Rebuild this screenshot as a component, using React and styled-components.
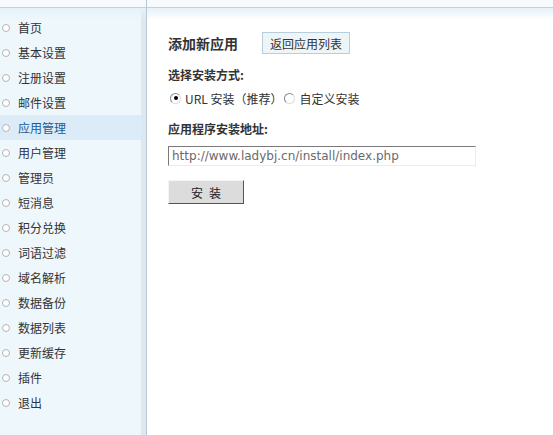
import React from 'react';
import styled, { createGlobalStyle, css } from 'styled-components';

const GlobalStyle = createGlobalStyle`
  html, body { margin: 0; padding: 0; background: #fff; }
  body {
    font-family: "Noto Sans CJK SC", "DejaVu Sans", sans-serif;
    font-size: 12px;
    color: #333;
  }
`;

const Page = styled.div`
  display: flex;
  height: 435px;
  overflow: hidden;
`;

const Sidebar = styled.div`
  width: 146px;
  flex: 0 0 146px;
  border-right: 1px solid #b6c8d4;
  background: linear-gradient(to right, #eef7fc 141px, #dce9f3 141px);
  display: flex;
  flex-direction: column;
`;

const TopStrip = styled.div`
  height: 7px;
  flex: 0 0 7px;
  background: #f6fafd;
  border-bottom: 1px solid #c0d2dd;
`;

const Glow = styled.div`
  height: 12px;
  background: linear-gradient(#e5f1f9, rgba(255, 255, 255, 0));
`;

const Menu = styled.ul`
  list-style: none;
  margin: 0;
  padding: 0;
  width: 141px;
  margin-top: -5px;
`;

const MenuItem = styled.li`
  height: 25px;
  display: flex;
  align-items: center;
  padding-left: 2px;
  gap: 6px;
  color: #333;
  ${(p) =>
    p.active &&
    css`
      background: #dbecf8;
      color: #1c5a94;
    `}
`;

const Bullet = styled.span`
  width: 6px;
  height: 6px;
  border-radius: 50%;
  border: 1px solid #b4b4b4;
  background: #fff;
  margin-right: 2px;
`;

const Main = styled.div`
  flex: 1;
  display: flex;
  flex-direction: column;
`;

const Content = styled.div`
  padding: 12px 0 0 21px;
  display: flex;
  flex-direction: column;
`;

const TitleRow = styled.div`
  display: flex;
  align-items: center;
  gap: 24px;
  height: 22px;
`;

const Title = styled.h2`
  margin: 0;
  font-size: 14px;
  font-weight: bold;
  color: #333;
`;

const BackButton = styled.button`
  height: 22px;
  width: 88px;
  padding: 0;
  font: inherit;
  font-size: 12px;
  color: #333;
  background: #edf5f9;
  border: 1px solid #b7cfdc;
`;

const Label = styled.div`
  font-weight: bold;
  margin-top: ${(p) => p.top}px;
  line-height: 16px;
`;

const RadioRow = styled.div`
  display: flex;
  align-items: center;
  margin-top: 7px;
  height: 16px;
  padding-left: 2px;
`;

const RadioOption = styled.label`
  display: flex;
  align-items: center;
  gap: 4px;
  margin-right: 2px;
  color: #333;
`;

const RadioDot = styled.span`
  width: 9px;
  height: 9px;
  border-radius: 50%;
  border: 1px solid #8a8a8a;
  border-right-color: #ddd;
  border-bottom-color: #ddd;
  background: #fff;
  display: flex;
  align-items: center;
  justify-content: center;
  &::after {
    content: '';
    width: 4px;
    height: 4px;
    border-radius: 50%;
    background: ${(p) => (p.checked ? '#000' : 'transparent')};
  }
`;

const UrlInput = styled.input`
  margin-top: 9px;
  width: 300px;
  height: 16px;
  padding: 1px 3px;
  font-family: "DejaVu Sans", Verdana, sans-serif;
  font-size: 12px;
  color: #6a6a6a;
  border: 1px solid #ececec;
  border-top-color: #7a7a7a;
  border-left-color: #7a7a7a;
  outline: none;
`;

const SubmitButton = styled.button`
  margin-top: 14px;
  width: 76px;
  height: 24px;
  padding: 0;
  font: inherit;
  font-size: 12px;
  color: #222;
  background: #dcdcdc;
  border: 1px solid;
  border-color: #f4f4f4 #555 #555 #f4f4f4;
  letter-spacing: 6px;
  text-indent: 6px;
`;

const menu = [
  '首页', '基本设置', '注册设置', '邮件设置', '应用管理', '用户管理', '管理员', '短消息',
  '积分兑换', '词语过滤', '域名解析', '数据备份', '数据列表', '更新缓存', '插件', '退出',
];

export default function App() {
  return (
    <Page>
      <GlobalStyle />
      <Sidebar>
        <TopStrip />
        <Glow />
        <Menu>
          {menu.map((m) => (
            <MenuItem key={m} active={m === '应用管理' ? 1 : 0}>
              <Bullet />
              {m}
            </MenuItem>
          ))}
        </Menu>
      </Sidebar>
      <Main>
        <TopStrip />
        <Glow />
        <Content>
          <TitleRow>
            <Title>添加新应用</Title>
            <BackButton>返回应用列表</BackButton>
          </TitleRow>
          <Label top={13}>选择安装方式:</Label>
          <RadioRow>
            <RadioOption>
              <RadioDot checked />
              URL 安装（推荐）
            </RadioOption>
            <RadioOption>
              <RadioDot />
              自定义安装
            </RadioOption>
          </RadioRow>
          <Label top={15}>应用程序安装地址:</Label>
          <UrlInput defaultValue="http://www.ladybj.cn/install/index.php" />
          <SubmitButton>安装</SubmitButton>
        </Content>
      </Main>
    </Page>
  );
}
